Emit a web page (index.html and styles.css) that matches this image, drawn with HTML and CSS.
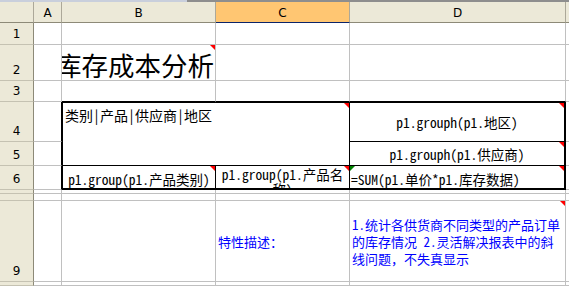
FILE: index.html
```html
<!DOCTYPE html>
<html lang="zh-CN">
<head>
<meta charset="utf-8">
<title>库存成本分析</title>
<link rel="stylesheet" href="styles.css">
</head>
<body>
<div class="topbar"><div class="topbar-left"></div><div class="topbar-right"></div></div>
<div class="sheet">
  <!-- column headers -->
  <div class="ch corner"></div>
  <div class="ch">A</div>
  <div class="ch">B</div>
  <div class="ch sel">C</div>
  <div class="ch">D</div>
  <div class="ch last"></div>

  <!-- row 1 -->
  <div class="rh">1</div>
  <div class="c"></div><div class="c"></div><div class="c"></div><div class="c"></div><div class="c x"></div>

  <!-- row 2 -->
  <div class="rh">2</div>
  <div class="c"></div>
  <div class="c title cm"><span>库存成本分析</span></div>
  <div class="c"></div><div class="c"></div><div class="c x"></div>

  <!-- row 3 -->
  <div class="rh">3</div>
  <div class="c"></div>
  <div class="c fb"></div><div class="c fb"></div><div class="c fb"></div>
  <div class="c x"></div>

  <!-- row 4 -->
  <div class="rh">4</div>
  <div class="c fr"></div>
  <div class="c corner-head cm">类别|产品|供应商|地区</div>
  <div class="c d4 mid cm">p1.grouph(p1.地区)</div>
  <div class="c x"></div>

  <!-- row 5 -->
  <div class="rh">5</div>
  <div class="c fr"></div>
  <div class="c d5 mid cm">p1.grouph(p1.供应商)</div>
  <div class="c x"></div>

  <!-- row 6 -->
  <div class="rh">6</div>
  <div class="c fr"></div>
  <div class="c b6 low cm">p1.group(p1.产品类别)</div>
  <div class="c c6 wrap cm">p1.group(p1.产品名<br>称)</div>
  <div class="c d6 low left cm err">=SUM(p1.单价*p1.库存数据)</div>
  <div class="c x"></div>

  <!-- row 7 -->
  <div class="rh"></div>
  <div class="c"></div><div class="c"></div><div class="c"></div><div class="c"></div><div class="c x"></div>

  <!-- row 8 -->
  <div class="rh"></div>
  <div class="c"></div><div class="c"></div><div class="c"></div><div class="c"></div><div class="c x"></div>

  <!-- row 9 -->
  <div class="rh">9</div>
  <div class="c"></div><div class="c"></div>
  <div class="c note-label">特性描述：</div>
  <div class="c note cm">1.统计各供货商不同类型的产品订单<br>的库存情况 2.灵活解决报表中的斜<br>线问题，不失真显示</div>
  <div class="c x"></div>

  <!-- row 10 -->
  <div class="rh"></div>
  <div class="c"></div><div class="c"></div><div class="c"></div><div class="c"></div><div class="c x"></div>
</div>
</body>
</html>
```

FILE: styles.css
```css
* { box-sizing: border-box; }

html, body {
  margin: 0;
  padding: 0;
  background: #ffffff;
  overflow: hidden;
}

body {
  width: 569px;
  height: 286px;
}

.topbar {
  display: flex;
  height: 2px;
}
.topbar-left { width: 187px; background: #c9cfdc; }
.topbar-right { flex: 1; background: #8e8e8e; }

.sheet {
  display: grid;
  grid-template-columns: 34px 28px 154px 134px 216px 3px;
  grid-template-rows: 21px 22px 36px 21px 40px 24px 24px 4px 7px 81px 4px;
  font-family: "Noto Sans Mono CJK SC", "Noto Sans CJK SC", monospace;
  font-size: 13.5px;
  color: #000;
}

/* column headers */
.ch {
  background: #ece9d8;
  border-right: 1px solid #aca899;
  border-bottom: 1px solid #8d8a78;
  font-family: "DejaVu Sans", sans-serif;
  font-size: 12px;
  display: flex;
  align-items: center;
  justify-content: center;
  padding-top: 2px;
}
.ch.sel {
  background: #ffc672;
  border-bottom-color: #0a246a;
}
.ch.last { border-right: none; }

/* row headers */
.rh {
  background: #ece9d8;
  border-right: 1px solid #8d8a78;
  border-bottom: 1px solid #c5c2b2;
  font-family: "DejaVu Sans", sans-serif;
  font-size: 12px;
  line-height: 15px;
  display: flex;
  align-items: flex-end;
  justify-content: center;
  padding-bottom: 2px;
  overflow: hidden;
}

/* cells */
.c {
  position: relative;
  background: #fff;
  border-right: 1px solid #c0c0c0;
  border-bottom: 1px solid #c0c0c0;
  overflow: hidden;
  white-space: nowrap;
}
.c.x { border-right: none; }

/* frame of the report table */
.c.fb { border-bottom-color: #000; }
.c.fr { border-right-color: #000; }

.title {
  display: flex;
  align-items: flex-end;
  justify-content: flex-end;
  padding-right: 1px;
  font-family: "Noto Sans CJK SC", sans-serif;
  font-size: 26.5px;
  line-height: 30px;
  overflow: hidden;
}
.title span { flex: none; }

.corner-head {
  grid-column: span 2;
  grid-row: span 2;
  border-left: 1px solid #000;
  border-top: 1px solid #000;
  border-right-color: #000;
  border-bottom-color: #000;
  font-size: 14px;
  line-height: 16px;
  padding: 4px 0 0 2px;
}

.mid {
  display: flex;
  align-items: center;
  justify-content: center;
  line-height: 16px;
}
.low {
  display: flex;
  align-items: flex-end;
  justify-content: center;
  line-height: 16px;
  padding-bottom: 1px;
}
.low.left {
  justify-content: flex-start;
  padding-left: 1px;
}

.d4 {
  border-top: 1px solid #000;
  border-right: 2px solid #000;
  border-bottom-color: #000;
}
.d5 {
  border-right: 2px solid #000;
  border-bottom-color: #000;
}
.b6 {
  border-left: 1px solid #000;
  border-right-color: #000;
  border-bottom: 2px solid #000;
}
.c6 {
  border-right-color: #000;
  border-bottom: 2px solid #000;
}
.d6 {
  border-right: 2px solid #000;
  border-bottom: 2px solid #000;
}

.wrap {
  text-align: center;
  line-height: 15px;
  padding-top: 1px;
}

.note-label,
.note {
  color: #0000ff;
  font-size: 13px;
  display: flex;
  align-items: center;
  padding-left: 2px;
}
.note { line-height: 17px; }

/* comment indicator */
.cm::after {
  content: "";
  position: absolute;
  top: 0;
  right: 0;
  width: 0;
  height: 0;
  border-top: 5px solid #ff0000;
  border-left: 5px solid transparent;
}
/* error indicator */
.err::before {
  content: "";
  position: absolute;
  top: 0;
  left: 0;
  width: 0;
  height: 0;
  border-top: 5px solid #008000;
  border-right: 5px solid transparent;
}
```
